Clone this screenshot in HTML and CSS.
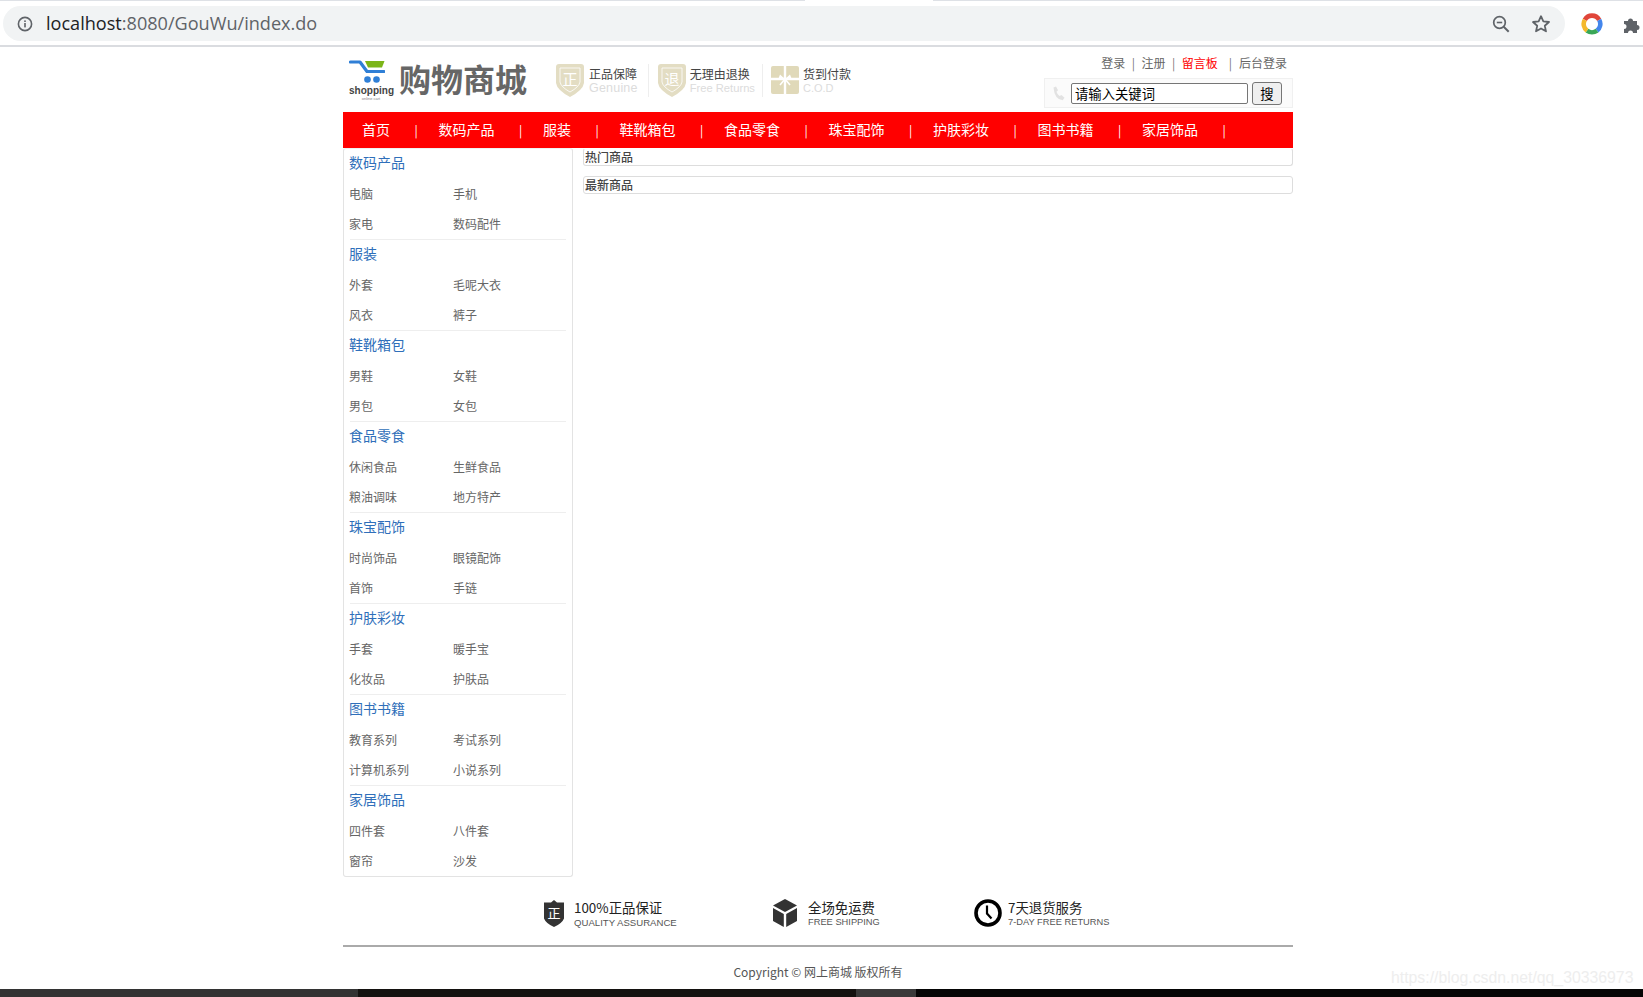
FILE: index.html
```html
<!DOCTYPE html>
<html lang="zh">
<head>
<meta charset="utf-8">
<title>购物商城</title>
<link rel="stylesheet" href="styles.css">
</head>
<body>
<div class="browser">
  <div class="tabline"><span class="tl-a"></span><span class="tl-b"></span><span class="tl-c"></span></div>
  <div class="toolbar">
    <div class="omnibox">
      <svg class="info" width="16" height="16" viewBox="0 0 16 16"><circle cx="8" cy="8" r="6.6" fill="none" stroke="#5f6368" stroke-width="1.6"/><rect x="7.2" y="7" width="1.6" height="4.4" fill="#5f6368"/><rect x="7.2" y="4.4" width="1.6" height="1.6" fill="#5f6368"/></svg>
      <div class="url"><span class="host">localhost</span>:8080/GouWu/index.do</div>
      <svg class="zoomic" width="18" height="18" viewBox="0 0 18 18"><circle cx="7.5" cy="7.5" r="5.8" fill="none" stroke="#5f6368" stroke-width="1.7"/><path d="M4.8 7.5h5.4" stroke="#5f6368" stroke-width="1.6"/><path d="M11.7 11.7l5 5" stroke="#5f6368" stroke-width="2"/></svg>
      <svg class="star" width="20" height="20" viewBox="0 0 18 18"><path d="M9 2l2.100 4.700 5.100.5-3.800 3.400 1.100 5L9 13l-4.500 2.600 1.100-5L1.800 7.200l5.100-.5z" fill="none" stroke="#5f6368" stroke-width="1.600" stroke-linejoin="round"/></svg>
    </div>
    <svg class="ext" width="22" height="22" viewBox="0 0 22 22"><g fill="none" stroke-width="4.600"><path d="M3.800 6.800A8.300 8.300 0 0 1 18.200 6.800" stroke="#e0463a"/><path d="M18.200 6.800A8.300 8.300 0 0 1 16 17.600" stroke="#4386ec"/><path d="M16 17.600A8.300 8.300 0 0 1 6 17.600" stroke="#3aa757"/><path d="M6 17.600A8.300 8.300 0 0 1 3.800 6.800" stroke="#f4b92c"/></g></svg>
    <svg class="puzzle" width="18" height="18" viewBox="0 0 18 18"><path d="M1 6h4a2.500 2.500 0 1 1 5 0h4v4a2.500 2.500 0 1 1 0 5v3h-4a2.500 2.500 0 1 0-5 0H1v-4a2.500 2.500 0 1 0 0-5z" fill="#5f6368"/></svg>
  </div>
</div>

<div class="page">
  <header class="head">
    <div class="logo">
      <div class="logo-mark">
        <svg width="36" height="26" viewBox="0 0 36 26"><path d="M1.500 4H11l7 9.500h17" fill="none" stroke="#2f7fd6" stroke-width="3.200" stroke-linecap="round" stroke-linejoin="round"/><path d="M16 3h19.500l-2.500 6.500H19z" fill="#7cb518"/><circle cx="18.500" cy="21.500" r="3.300" fill="#2f7fd6"/><circle cx="27.500" cy="21.500" r="3.300" fill="#2f7fd6"/></svg>
        <div class="logo-en">shopping</div>
        <div class="logo-sub">online cart</div>
      </div>
      <div class="logo-name">购物商城</div>
    </div>
    <div class="badges">
      <div class="badge badge-1">
        <svg class="badge-ic" width="28" height="33" viewBox="0 0 28 33"><path d="M3 0h22q3 0 3 3v16q-1 7-14 14Q1 26 0 19V3q0-3 3-3z" fill="#e3ddc3"/><path d="M4 4h20v14q-1 5-10 10Q5 23 4 18z" fill="none" stroke="#fff" stroke-width=".8"/><text x="14" y="20.500" class="badge-glyph">正</text></svg>
        <div class="badge-txt"><div class="b-cn">正品保障</div><div class="b-en en-1">Genuine</div></div>
      </div>
      <div class="badge badge-2">
        <svg class="badge-ic" width="28" height="33" viewBox="0 0 28 33"><path d="M3 0h22q3 0 3 3v16q-1 7-14 14Q1 26 0 19V3q0-3 3-3z" fill="#e3ddc3"/><path d="M4 4h20v14q-1 5-10 10Q5 23 4 18z" fill="none" stroke="#fff" stroke-width=".8"/><text x="14" y="20.500" class="badge-glyph">退</text></svg>
        <div class="badge-txt"><div class="b-cn">无理由退换</div><div class="b-en en-2">Free Returns</div></div>
      </div>
      <div class="badge badge-3">
        <svg class="badge-ic" width="28" height="28" viewBox="0 0 28 28"><rect width="28" height="28" rx="2" fill="#e0d9b9"/><path d="M12.800 0h2.400v28h-2.400zM0 11.800h28v2.400H0z" fill="#fff"/><path d="M14 13L9 8.500 7.500 12.500zM14 13l5-4.500 1.500 4z" fill="#fff"/><path d="M14 13L9 19M14 13l5 6" stroke="#fff" stroke-width="1.600" fill="none"/></svg>
        <div class="badge-txt"><div class="b-cn">货到付款</div><div class="b-en en-3">C.O.D</div></div>
      </div>
    </div>
    <div class="head-right">
      <div class="links"><a>登录</a><i>|</i><a>注册</a><i>|</i><a class="red">留言板</a><i class="wide">|</i><a>后台登录</a></div>
      <form class="search">
        <svg class="phone" width="13" height="15" viewBox="0 0 13 15"><path d="M1.500 1.500L4 .5l2 3.800L4.500 5.800q.8 2.800 3 4.200L9.500 9l3 2.800-1.800 2.400Q2.500 13.500 1.500 1.500z" fill="#e2e2e2"/></svg>
        <input class="kw" type="text" value="请输入关键词">
        <button class="go" type="button">搜</button>
      </form>
    </div>
  </header>

  <nav class="nav">
    <a>首页</a><i>|</i><a>数码产品</a><i>|</i><a>服装</a><i>|</i><a>鞋靴箱包</a><i>|</i><a>食品零食</a><i>|</i><a>珠宝配饰</a><i>|</i><a>护肤彩妆</a><i>|</i><a>图书书籍</a><i>|</i><a>家居饰品</a><i>|</i>
  </nav>

  <div class="content">
    <aside class="side">
      <section class="cat"><h3>数码产品</h3><ul><li>电脑</li><li>手机</li><li>家电</li><li>数码配件</li></ul></section>
      <section class="cat"><h3>服装</h3><ul><li>外套</li><li>毛呢大衣</li><li>风衣</li><li>裤子</li></ul></section>
      <section class="cat"><h3>鞋靴箱包</h3><ul><li>男鞋</li><li>女鞋</li><li>男包</li><li>女包</li></ul></section>
      <section class="cat"><h3>食品零食</h3><ul><li>休闲食品</li><li>生鲜食品</li><li>粮油调味</li><li>地方特产</li></ul></section>
      <section class="cat"><h3>珠宝配饰</h3><ul><li>时尚饰品</li><li>眼镜配饰</li><li>首饰</li><li>手链</li></ul></section>
      <section class="cat"><h3>护肤彩妆</h3><ul><li>手套</li><li>暖手宝</li><li>化妆品</li><li>护肤品</li></ul></section>
      <section class="cat"><h3>图书书籍</h3><ul><li>教育系列</li><li>考试系列</li><li>计算机系列</li><li>小说系列</li></ul></section>
      <section class="cat"><h3>家居饰品</h3><ul><li>四件套</li><li>八件套</li><li>窗帘</li><li>沙发</li></ul></section>
    </aside>
    <main class="main">
      <div class="panel">热门商品</div>
      <div class="panel">最新商品</div>
    </main>
  </div>

  <div class="promise">
    <div class="pr pr-1">
      <svg width="20" height="27" viewBox="0 0 20 27"><path d="M10 0l3 2.500h7v16q-2 5-10 8.500Q2 23.500 0 18.500v-16h7z" fill="#333"/><text x="10" y="18" class="pr-glyph">正</text></svg>
      <div class="pr-txt"><div class="pr-cn">100%正品保证</div><div class="pr-en en-q">QUALITY ASSURANCE</div></div>
    </div>
    <div class="pr pr-2">
      <svg width="24" height="28" viewBox="0 0 24 28"><path d="M12 0l12 6.500L12 13 0 6.500z" fill="#333"/><path d="M0 9l10.800 6v13L0 22zM24 9l-10.800 6v13L24 22z" fill="#333"/></svg>
      <div class="pr-txt"><div class="pr-cn">全场免运费</div><div class="pr-en">FREE SHIPPING</div></div>
    </div>
    <div class="pr pr-3">
      <svg width="28" height="28" viewBox="0 0 28 28"><circle cx="14" cy="14" r="12" fill="none" stroke="#000" stroke-width="3.600"/><path d="M13 6.500v8l4.500 5" fill="none" stroke="#000" stroke-width="2.200"/></svg>
      <div class="pr-txt"><div class="pr-cn">7天退货服务</div><div class="pr-en">7-DAY FREE RETURNS</div></div>
    </div>
  </div>

  <footer class="copy">Copyright © 网上商城 版权所有</footer>
</div>

<div class="strip"><span class="s1"></span><span class="s2"></span><span class="s3"></span><span class="s4"></span></div>
<div class="mark">https://blog.csdn.net/qq_30336973</div>
</body>
</html>
```
FILE: styles.css
```css
* { box-sizing: border-box; }
html, body { margin: 0; padding: 0; }
body {
  width: 1643px;
  height: 997px;
  overflow: hidden;
  position: relative;
  background: #fff;
  font-family: "Noto Sans CJK SC", "Liberation Sans", sans-serif;
  font-size: 12px;
  color: #666;
}
ul { list-style: none; margin: 0; padding: 0; }
h3 { margin: 0; }
i { font-style: normal; }

/* browser chrome */
.browser { height: 47px; border-bottom: 2px solid #dadce0; background: #fff; }
.tabline { display: flex; height: 1px; }
.tl-a { width: 805px; background: #dee1e6; }
.tl-b { width: 128px; background: #fff; }
.tl-c { flex: 1; background: #dee1e6; }
.toolbar { display: flex; align-items: center; height: 44px; padding: 5px 0 4px 3px; }
.omnibox {
  display: flex; align-items: center;
  width: 1562px; height: 35px;
  border-radius: 18px;
  background: #f1f3f4;
  padding: 0 14px 0 14px;
}
.url {
  flex: 1;
  margin: 0 0 2px 13px;
  font-family: "Open Sans", sans-serif;
  font-size: 18.100px;
  color: #5f6368;
  white-space: nowrap;
}
.host { color: #202124; }
.zoomic { margin-right: 21px; }
.ext { margin-left: 16px; flex: none; }
.puzzle { margin-left: 20px; flex: none; }

/* page */
.page { width: 950px; margin: 0 auto 0 343px; }
.head { display: flex; height: 65px; position: relative; }
.logo { display: flex; width: 212px; }
.logo-mark { width: 56px; padding: 11px 0 0 6px; }
.logo-mark svg { display: block; }
.logo-en { font-family: "Liberation Sans", sans-serif; font-weight: 700; font-size: 10px; line-height: 11px; color: #444; text-align: center; width: 44px; margin-top: 1px; }
.logo-sub { font-family: "Liberation Sans", sans-serif; font-size: 4px; line-height: 5px; color: #888; text-align: center; width: 44px; }
.logo-name { font-size: 32px; font-weight: 700; color: #666; line-height: 42px; margin: 10px 0 0 0; white-space: nowrap; }

.badges { display: flex; width: 489px; padding-top: 17px; }
.badge { display: flex; height: 33px; }
.badge-ic { flex: none; }
.badge-txt { padding-top: 2px; }
.badge-1 { margin-left: 1px; }
.badge-1 .badge-txt { margin-left: 5px; padding-right: 10px; }
.badge-2 { padding-left: 9px; border-left: 1px solid #eee; }
.badge-2 .badge-txt { margin-left: 4px; padding-right: 7px; }
.badge-3 { padding-left: 8px; border-left: 1px solid #eee; }
.badge-3 .badge-ic { margin-top: 2px; }
.badge-3 .badge-txt { margin-left: 4px; }
.b-cn { font-size: 12px; line-height: 15px; color: #444; white-space: nowrap; }
.b-en { font-family: "Liberation Sans", sans-serif; line-height: 14px; color: #dcdcdc; white-space: nowrap; }
.en-1 { font-size: 12.500px; letter-spacing: .2px; }
.en-2 { font-size: 11.200px; }
.en-3 { font-size: 11px; }
.badge-glyph { font-family: "Noto Sans CJK SC", sans-serif; font-size: 15px; fill: #fff; text-anchor: middle; }
.pr-glyph { font-family: "Noto Sans CJK SC", sans-serif; font-size: 13px; fill: #fff; text-anchor: middle; }

.head-right { width: 249px; }
.links { display: flex; justify-content: flex-end; height: 31px; padding: 8px 6px 0 0; line-height: 16px; color: #666; white-space: nowrap; }
.links i { margin: 0 6.500px; color: #777; }
.links i.wide { margin: 0 7px 0 11px; }
.red { color: #f00; }
.search {
  display: flex; align-items: center;
  height: 30px; margin: 0;
  background: #fbfbfb;
  border: 1px solid #f0f0f0;
  padding: 0 10px 0 7px;
}
.phone { flex: none; margin-right: 6px; }
.kw {
  width: 177px; height: 21px;
  border: 1px solid #767676; border-radius: 2px;
  padding: 1px 3px 0; margin: 0;
  font-family: "Noto Sans CJK SC", sans-serif;
  font-size: 13.330px; color: #000; background: #fff;
}
.go {
  width: 30px; height: 23px; margin: 0 0 0 4px; padding: 0;
  border: 1px solid #767676; border-radius: 3px;
  background: #efefef; color: #000;
  font-family: "Noto Sans CJK SC", sans-serif;
  font-size: 13.330px;
}

.nav { display: flex; align-items: center; height: 36px; background: #f00; padding: 0 0 2px 19px; color: #fff; font-size: 14px; white-space: nowrap; }
.nav i { width: 4px; margin: 0 20.500px 0 24px; text-align: center; font-size: 12px; }
.nav a { color: #fff; }

.content { display: flex; align-items: flex-start; gap: 10px; }
.side { width: 230px; border: 1px solid #e3e3e3; border-top-color: #f0f0f0; border-radius: 3px; padding: 0 6px; }
.cat { height: 91px; border-bottom: 1px solid #eee; }
.cat:last-child { border-bottom: 0; height: 90px; }
.cat h3 { height: 30px; margin-left: -1px; font-size: 14px; font-weight: 400; line-height: 26px; color: #2f6fba; }
.cat ul { display: grid; grid-template-columns: 104px 1fr; grid-auto-rows: 30px; margin-left: -1px; }
.cat li { line-height: 30px; color: #666; white-space: nowrap; }

.main { flex: 1; }
.panel {
  height: 18px; margin-bottom: 10px;
  border: 1px solid #ddd; border-radius: 3px;
  padding-left: 1px;
  font-size: 12px; line-height: 16px; font-weight: 500; color: #444;
}
.panel:first-child { border-top-color: #fff; }

.promise { display: flex; height: 70px; border-bottom: 2px solid #aaa; }
.pr { display: flex; align-items: center; height: 44px; margin-top: 14px; white-space: nowrap; }
.pr-1 { margin-left: 201px; gap: 10px; width: 229px; }
.pr-2 { width: 201px; gap: 11px; }
.pr-3 { gap: 6px; }
.pr-txt { padding-top: 4px; }
.pr-cn { font-size: 13.400px; line-height: 15px; color: #222; }
.pr-en { font-family: "Liberation Sans", sans-serif; font-size: 9.300px; line-height: 15px; color: #555; }
.en-q { font-size: 9.600px; }

.copy { text-align: center; padding-top: 15px; line-height: 20px; color: #555; }

.strip { position: absolute; left: 0; right: 0; top: 989px; height: 8px; display: flex; }
.s1 { width: 358px; background: #333; }
.s2 { width: 498px; background: #141210; }
.s3 { width: 60px; background: #3a3a3a; }
.s4 { flex: 1; background: #050505; }
.mark { position: absolute; left: 1391px; top: 969px; font-family: "Liberation Sans", sans-serif; font-size: 15.800px; color: #eee; white-space: nowrap; }
```
